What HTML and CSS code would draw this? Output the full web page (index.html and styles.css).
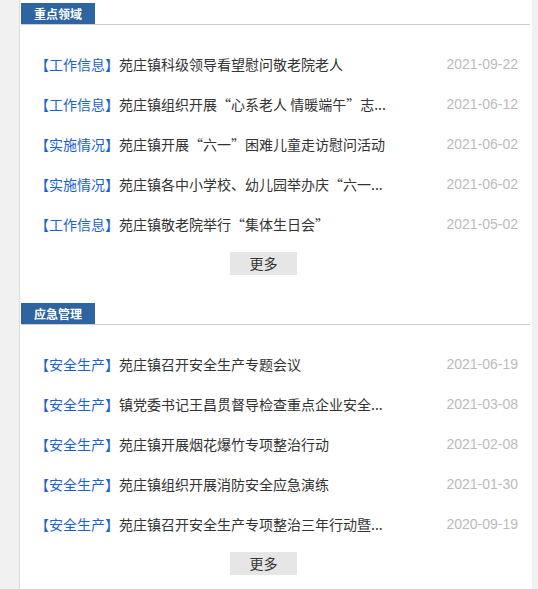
FILE: index.html
```html
<!DOCTYPE html>
<html lang="zh-CN">
<head>
  <meta charset="UTF-8" />
  <meta name="viewport" content="width=device-width, initial-scale=1" />
  <title>苑庄镇 - 信息公开</title>
  <link rel="stylesheet" href="styles.css">
</head>
<body>

  <div class="page">

    <!-- 重点领域 -->
    <section class="block">
      <div class="block-head"><span class="block-title">重点领域</span></div>
      <ul class="news-list">
        <li><span class="cat">【工作信息】</span><a class="title" href="#">苑庄镇科级领导看望慰问敬老院老人</a><span class="date">2021-09-22</span></li>
        <li><span class="cat">【工作信息】</span><a class="title" href="#">苑庄镇组织开展“心系老人 情暖端午”志...</a><span class="date">2021-06-12</span></li>
        <li><span class="cat">【实施情况】</span><a class="title" href="#">苑庄镇开展“六一”困难儿童走访慰问活动</a><span class="date">2021-06-02</span></li>
        <li><span class="cat">【实施情况】</span><a class="title" href="#">苑庄镇各中小学校、幼儿园举办庆“六一...</a><span class="date">2021-06-02</span></li>
        <li><span class="cat">【工作信息】</span><a class="title" href="#">苑庄镇敬老院举行“集体生日会”</a><span class="date">2021-05-02</span></li>
      </ul>
      <div class="more-wrap"><a class="more" href="#">更多</a></div>
    </section>

    <!-- 应急管理 -->
    <section class="block">
      <div class="block-head"><span class="block-title">应急管理</span></div>
      <ul class="news-list">
        <li><span class="cat">【安全生产】</span><a class="title" href="#">苑庄镇召开安全生产专题会议</a><span class="date">2021-06-19</span></li>
        <li><span class="cat">【安全生产】</span><a class="title" href="#">镇党委书记王昌贯督导检查重点企业安全...</a><span class="date">2021-03-08</span></li>
        <li><span class="cat">【安全生产】</span><a class="title" href="#">苑庄镇开展烟花爆竹专项整治行动</a><span class="date">2021-02-08</span></li>
        <li><span class="cat">【安全生产】</span><a class="title" href="#">苑庄镇组织开展消防安全应急演练</a><span class="date">2021-01-30</span></li>
        <li><span class="cat">【安全生产】</span><a class="title" href="#">苑庄镇召开安全生产专项整治三年行动暨...</a><span class="date">2020-09-19</span></li>
      </ul>
      <div class="more-wrap"><a class="more" href="#">更多</a></div>
    </section>

  </div>

</body>
</html>
```

FILE: styles.css
```css
body {
  margin: 0;
  background: #f1f1f1;
  font-family: "Noto Sans CJK SC", sans-serif;
}
a {
  text-decoration: none;
}
.page {
  margin-left: 19px;
  width: 513px;
  min-height: 100vh;
  padding-top: 3px;
  box-sizing: border-box;
  background: #fff;
  border-left: 1px solid #dedede;
}

/* Section header */
.block {
  margin-bottom: 28px;
}
.block-head {
  display: flex;
  height: 21px;
  margin: 0 2px 0 1px;
  border-bottom: 1px solid #cccccc;
}
.block-title {
  width: 74px;
  height: 21px;
  line-height: 21px;
  text-align: center;
  font-size: 12px;
  font-weight: bold;
  color: #fff;
  background: #2d64a1;
}

/* News rows */
.news-list {
  list-style: none;
  margin: 0;
  padding: 19px 14px 0 15px;
}
.news-list li {
  display: flex;
  height: 40px;
  line-height: 40px;
  font-size: 14px;
  white-space: nowrap;
}
.cat {
  color: #1a62cf;
}
.title {
  color: #333;
}
.date {
  margin-left: auto;
  color: #bbbbbb;
  font-family: "Liberation Sans", sans-serif;
}

/* More button */
.more-wrap {
  display: flex;
  padding: 8px 0 0 210px;
}
.more {
  width: 67px;
  height: 23px;
  line-height: 23px;
  text-align: center;
  font-size: 14px;
  color: #333;
  background: #e6e6e6;
}
```
